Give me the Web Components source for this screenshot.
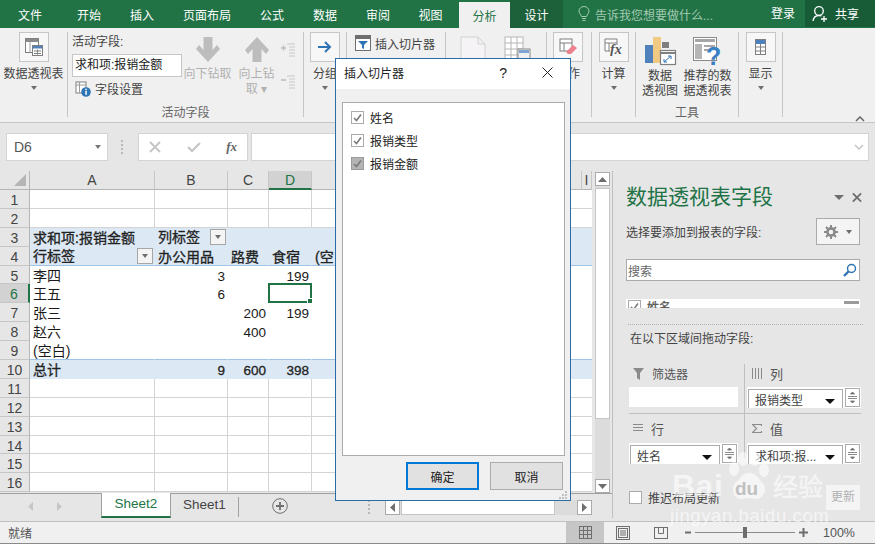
<!DOCTYPE html>
<html lang="zh">
<head>
<meta charset="utf-8">
<title>Excel</title>
<style>
  html, body { margin: 0; height: 100%; overflow: hidden; background: #e6e6e6; }
  body {
    position: relative;
    width: 875px;
    height: 544px;
    font: 12px "Liberation Sans", "Noto Sans CJK SC", sans-serif;
    color: #444;
  }
  .workspace { display: grid; grid-template-columns: 612px 263px; height: 350px; }
  .left { display: flex; flex-direction: column; min-width: 0; }
</style>
</head>
<body>
<excel-titlebar></excel-titlebar>
<excel-ribbon></excel-ribbon>
<excel-formula-bar></excel-formula-bar>
<div class="workspace">
  <div class="left">
    <excel-sheet></excel-sheet>
    <excel-sheet-tabs></excel-sheet-tabs>
  </div>
  <pivot-pane></pivot-pane>
</div>
<excel-status-bar></excel-status-bar>
<slicer-dialog>
  <slicer-check>姓名</slicer-check>
  <slicer-check>报销类型</slicer-check>
  <slicer-check filled>报销金额</slicer-check>
</slicer-dialog>
<baidu-mark></baidu-mark>

<script>
// Excel pivot-table window. Each region is its own element; the ribbon,
// sheet and tab rows are built from small data tables below.

const mount = (host, css, html) => {
  host.attachShadow({ mode: "open" }).innerHTML = `<style>${css}</style>${html}`;
};

const CJK = `"Liberation Sans", "Noto Sans CJK SC", sans-serif`;

const TABS = [
  ["文件", 60], ["开始", 58], ["插入", 48], ["页面布局", 82], ["公式", 48],
  ["数据", 58], ["审阅", 48], ["视图", 57], ["分析", 51, "active"], ["设计", 53, "dark"],
];

class ExcelTitlebar extends HTMLElement {
  constructor() {
    super();
    const tabs = TABS.map(([t, w, c]) => `<div class="tab ${c || ""}" style="width:${w}px">${t}</div>`).join("");
    mount(this, `
      :host { display: flex; height: 28px; background: #217346; color: #fff; font-size: 12px; }
      .tab { display: flex; align-items: center; justify-content: center; height: 28px; flex: none; }
      .tab.active { background: #f0f0f0; color: #217346; height: 26px; margin-top: 2px; }
      .tab.dark { background: #1c6139; }
      .hint { display: flex; align-items: center; gap: 5px; margin-left: 15px; color: #a3c9b2; width: 185px; flex: none; }
      .login { width: 40px; text-align: center; line-height: 28px; flex: none; }
      .share { display: flex; align-items: center; gap: 6px; width: 70px; margin-left: 2px; padding-left: 7px; flex: none;
               box-sizing: border-box; background: #185c37; height: 27px; }
    `, `
      ${tabs}
      <div class="hint">
        <svg width="12" height="16" viewBox="0 0 12 16" fill="none" stroke="#a3c9b2"><path d="M3.500 10.500C3 8.500 1 7.500 1 5a5 4.500 0 0 1 10 0c0 2.500-2 3.500-2.500 5.500zM4 12.500h4M4.500 14.500h3"/></svg>
        <span>告诉我您想要做什么...</span>
      </div>
      <div class="login">登录</div>
      <div class="share">
        <svg width="17" height="18" viewBox="0 0 17 18" fill="none" stroke="#fff" stroke-width="1.300"><circle cx="7" cy="6" r="4.300"/><path d="M1 16c.5-3.500 2.500-5.500 6-5.500 1 0 1.800.2 2.500.5M12 11v6M9 14h6"/></svg>
        <span>共享</span>
      </div>
    `);
  }
}

class RibbonButton extends HTMLElement {
  constructor() {
    super();
    const lines = (this.getAttribute("label") || "").split("|").map((l) => `<div>${l}</div>`).join("");
    const boxed = this.hasAttribute("boxed");
    const caret = this.hasAttribute("caret") ? `<i class="caret"></i>` : "";
    mount(this, `
      :host { display: flex; flex-direction: column; align-items: center; line-height: 15px; color: #444; flex: none; }
      :host([disabled]) { color: #b1b1b1; }
      .icon { display: flex; align-items: flex-start; justify-content: center; height: 30px; }
      .icon.boxed { width: 28px; border: 1px solid #c6c6c6; background: #f7f7f7; height: 28px; align-items: center; }
      .label { margin-top: var(--label-top, 5px); text-align: center; white-space: nowrap; }
      .caret { width: 0; height: 0; margin-top: 4px; border: 3px solid transparent; border-top: 4px solid #6e6e6e; border-bottom: 0; }
    `, `
      <div class="icon ${boxed ? "boxed" : ""}"><slot></slot></div>
      <div class="label">${lines}</div>
      ${caret}
    `);
  }
}

class RibbonGroup extends HTMLElement {
  constructor() {
    super();
    const label = this.getAttribute("label");
    mount(this, `
      :host { display: flex; flex-direction: column; box-sizing: border-box; height: 85px; margin-top: 4px;
              border-right: 1px solid #c6c6c6; flex: none; }
      .body { flex: 1; display: flex; min-height: 0; }
      .name { text-align: center; line-height: 15px; color: #666; height: 15px; margin-bottom: -4px; }
    `, `<div class="body"><slot></slot></div>${label ? `<div class="name">${label}</div>` : ""}`);
  }
}

const ICON_PIVOT = `<svg width="20" height="20" viewBox="0 0 20 20"><rect x="1.500" y="1.500" width="13" height="14" fill="#fff" stroke="#7f7f7f"/><path d="M6 5v10" stroke="#9a9a9a"/><rect x="2" y="2" width="12" height="3" fill="#8a8a8a"/><rect x="8.500" y="8.500" width="10" height="10" fill="#fff" stroke="#7f7f7f"/><rect x="9" y="9" width="9" height="2.500" fill="#4f81bd"/><path d="M10 14h7M10 16.500h7M13.500 12.500v5" stroke="#7f7f7f"/></svg>`;

class ExcelRibbon extends HTMLElement {
  constructor() {
    super();
    mount(this, `
      :host { display: flex; box-sizing: border-box; height: 95px; background: #f0f0f0; border-bottom: 1px solid #c6c6c6; color: #444; }
      .col { display: flex; flex-direction: column; flex: none; }
      .field { padding-left: 4px; width: 115px; box-sizing: border-box; }
      .field .t { line-height: 15px; margin-top: 3px; }
      .field .in { box-sizing: border-box; height: 23px; width: 110px; margin-top: 4px; padding-left: 2px; line-height: 21px;
                   background: #fff; border: 1px solid #c6c6c6; color: #222; white-space: nowrap; }
      .field .set { display: flex; align-items: center; gap: 4px; margin: 3px 0 0 3px; }
      .small { margin: 11px 0 0 0; display: flex; flex-direction: column; gap: 15px; }
      .slice { display: flex; align-items: center; gap: 4px; margin: 3px 0 0 8px; height: 16px; white-space: nowrap; }
      .collapse { margin: 83px 0 0 72px; }
    `, `
      <ribbon-group style="width:68px">
        <ribbon-button label="数据透视表" boxed caret style="width:67px">${ICON_PIVOT}</ribbon-button>
      </ribbon-group>

      <ribbon-group label="活动字段" style="width:236px">
        <div class="col field">
          <div class="t">活动字段:</div>
          <div class="in">求和项:报销金额</div>
          <div class="set">
            <svg width="16" height="16" viewBox="0 0 16 16"><rect x="1" y="1" width="10" height="11" fill="#fff" stroke="#7f7f7f"/><path d="M1 4h10M4.500 1v11" stroke="#9a9a9a"/><circle cx="11" cy="11" r="4.800" fill="#2f75b5"/><rect x="10.300" y="9.800" width="1.500" height="4" fill="#fff"/><rect x="10.300" y="7.700" width="1.500" height="1.400" fill="#fff"/></svg>
            <span>字段设置</span>
          </div>
        </div>
        <ribbon-button label="向下钻取" disabled style="width:49px">
          <svg width="24" height="31" viewBox="0 0 24 31"><path d="M7.500 5h9v13l4.500-5 3 4-12 13L0 17l3-4 4.500 5z" fill="#bdbdbd"/></svg>
        </ribbon-button>
        <ribbon-button label="向上钻|取 ▾" disabled style="width:49px">
          <svg width="24" height="31" viewBox="0 0 24 31"><path d="M7.500 30h9V17l4.500 5 3-4L12 5 0 18l3 4 4.500-5z" fill="#bdbdbd"/></svg>
        </ribbon-button>
        <div class="small">
          <svg width="15" height="17" viewBox="0 0 15 17" fill="none"><path d="M0 5h5M2.500 2.500v5" stroke="#bdbdbd" stroke-width="1.500"/><path d="M6 1h8M8 4h6M8 7h6M8 10h6M8 13h6" stroke="#c8c8c8"/></svg>
          <svg width="15" height="17" viewBox="0 0 15 17" fill="none"><path d="M0 5h5" stroke="#bdbdbd" stroke-width="1.500"/><path d="M6 1h8M8 4h6M8 7h6M8 10h6M8 13h6" stroke="#c8c8c8"/></svg>
        </div>
      </ribbon-group>

      <ribbon-group style="width:43px">
        <ribbon-button label="分组" boxed caret style="width:42px">
          <svg width="14" height="12" viewBox="0 0 14 12" fill="none" stroke="#2f75b5" stroke-width="2"><path d="M0 6h12M7 1l5 5-5 5"/></svg>
        </ribbon-button>
      </ribbon-group>

      <ribbon-group style="width:99px">
        <div class="slice">
          <svg width="16" height="16" viewBox="0 0 16 16"><rect x=".5" y=".5" width="15" height="15" fill="#fff" stroke="#6e6e6e"/><rect x="1" y="1" width="14" height="3" fill="#6e6e6e"/><path d="M3 6h10l-4 4v4l-2-1v-3z" fill="#2f75b5"/></svg>
          <span>插入切片器</span>
        </div>
      </ribbon-group>

      <ribbon-group style="width:101px">
        <div class="col" style="margin:4px 0 0 14px">
          <svg width="27" height="30" viewBox="0 0 27 30" fill="#f6f3f6" stroke="#d2d2d2"><path d="M1 1h17l7 7v21H1zM18 1v7h7"/></svg>
        </div>
        <div class="col" style="margin:4px 0 0 17px">
          <svg width="27" height="30" viewBox="0 0 27 30" fill="#fff" stroke="#b5b5b5"><rect x="1" y="1" width="18" height="25"/><path d="M1 7h18M1 13h18M1 19h18M7 1v25M13 1v25"/><rect x="14" y="13" width="12" height="14" fill="#f0f0f0" stroke="#8a8a8a"/><rect x="15" y="14" width="10" height="3" fill="#7ea6d2" stroke="none"/></svg>
        </div>
      </ribbon-group>

      <ribbon-group style="width:45px">
        <ribbon-button label="操作" boxed caret style="width:44px;margin-left:-1px">
          <svg width="18" height="18" viewBox="0 0 18 18"><rect x="1" y="1" width="12" height="12" fill="#fff" stroke="#7f7f7f"/><path d="M1 5h12M5 5v8" stroke="#7f7f7f"/><path d="M7 14l7-7 4 3-6 6H9z" fill="#ee7f8d"/></svg>
        </ribbon-button>
      </ribbon-group>

      <ribbon-group style="width:44px">
        <ribbon-button label="计算" boxed caret style="width:43px">
          <svg width="19" height="18" viewBox="0 0 19 18"><path d="M13 7V1H1v12h5" fill="#fff" stroke="#7f7f7f"/><path d="M1 5h12M5 5v8" stroke="#7f7f7f"/><text x="6" y="16" font-family="Liberation Serif" font-style="italic" font-weight="700" font-size="14" fill="#555">fx</text></svg>
        </ribbon-button>
      </ribbon-group>

      <ribbon-group label="工具" style="width:103px">
        <ribbon-button label="数据|透视图" style="width:48px;--label-top:7px">
          <svg width="31" height="28" viewBox="0 0 31 28" style="margin-top:5px;overflow:visible"><rect x="0" y="8" width="9" height="18" fill="#4f81bd"/><rect x="8" y="0" width="8" height="26" fill="#f0c982"/><rect x="17" y="5" width="7" height="6" fill="#7f7f7f"/><rect x="15.500" y="13.500" width="15" height="14" fill="#fff" stroke="#7f7f7f" stroke-width="1.200"/><path d="M16 16h14" stroke="#7f7f7f" stroke-width="2"/><path d="M19 25l7-6m0 0h-3m3 0v3M19 25h3m-3 0v-3" fill="none" stroke="#2f75b5"/></svg>
        </ribbon-button>
        <ribbon-button label="推荐的数|据透视表" style="width:49px;margin-left:-1px;--label-top:7px">
          <svg width="29" height="30" viewBox="0 0 29 30" style="margin-top:5px;overflow:visible"><rect x=".5" y=".5" width="23" height="23" fill="#fff" stroke="#8a8a8a"/><rect x="2" y="2" width="20" height="3" fill="#a6a6a6"/><rect x="2" y="7" width="7" height="15" fill="#b5b5b5"/><path d="M11 9h11M11 13h5" stroke="#a6a6a6" stroke-width="2"/><text x="13" y="28" font-family="Liberation Sans" font-weight="700" font-size="25" fill="#3b7fc4">?</text></svg>
        </ribbon-button>
      </ribbon-group>

      <ribbon-group style="width:44px">
        <ribbon-button label="显示" boxed caret style="width:43px">
          <svg width="11" height="16" viewBox="0 0 11 16"><rect x=".5" y=".5" width="10" height="15" fill="#fff" stroke="#7f7f7f"/><rect x="1" y="1" width="9" height="4" fill="#4f81bd"/><path d="M1 8h9M1 12h9M5.500 5v10" stroke="#7f7f7f"/></svg>
        </ribbon-button>
      </ribbon-group>

      <div class="collapse">
        <svg width="10" height="6" viewBox="0 0 10 6" fill="none" stroke="#666" stroke-width="1.500"><path d="M1 5l4-4 4 4"/></svg>
      </div>
    `);
  }
}

class ExcelFormulaBar extends HTMLElement {
  constructor() {
    super();
    mount(this, `
      :host { display: flex; height: 48px; box-sizing: border-box; padding: 10px 6px 10px 6px; background: #e6e6e6; }
      .box { box-sizing: border-box; height: 28px; background: #fff; border: 1px solid #d4d4d4; display: flex; align-items: center; flex: none; }
      .name { width: 102px; padding: 0 6px 0 7px; justify-content: space-between; font-size: 14px; color: #555; }
      .tri { width: 0; height: 0; border: 3.500px solid transparent; border-top: 4px solid #777; border-bottom: 0; }
      .dots { width: 2px; margin: 0 15px 0 13px; display: flex; flex-direction: column; justify-content: center; gap: 2px; flex: none; }
      .dots i { height: 2px; background: #b8b8b8; }
      .fx { width: 110px; padding: 0 10px; justify-content: space-between; color: #666; }
      .fx em { font: italic 700 13px "Liberation Serif", serif; color: #666; }
      .input { width: 618px; margin-left: 3px; justify-content: flex-end; padding-right: 4px; }
    `, `
      <div class="box name"><span>D6</span><i class="tri"></i></div>
      <div class="dots"><i></i><i></i><i></i><i></i></div>
      <div class="box fx">
        <svg width="12" height="12" viewBox="0 0 12 12" fill="none" stroke="#c4c4c4" stroke-width="1.800"><path d="M1 1l10 10M11 1L1 11"/></svg>
        <svg width="14" height="12" viewBox="0 0 14 12" fill="none" stroke="#c4c4c4" stroke-width="2"><path d="M1 6l4 4 8-8"/></svg>
        <em>fx</em>
      </div>
      <div class="box input">
        <svg width="10" height="6" viewBox="0 0 10 6" fill="none" stroke="#c4c4c4" stroke-width="1.500"><path d="M1 1l4 4 4-4"/></svg>
      </div>
    `);
  }
}

// row -> column -> text. Numbers sit to the right of their cell.
const CELLS = {
  3:  { A: "求和项:报销金额", B: "列标签#" },
  4:  { A: "行标签#", B: "办公用品", C: "路费", D: "食宿", E: "(空" },
  5:  { A: "李四", B: 3, D: 199 },
  6:  { A: "王五", B: 6 },
  7:  { A: "张三", C: 200, D: 199 },
  8:  { A: "赵六", C: 400 },
  9:  { A: "(空白)" },
  10: { A: "总计", B: 9, C: 600, D: 398 },
};
const COLS = ["A", "B", "C", "D", "E", "I"];

class ExcelSheet extends HTMLElement {
  constructor() {
    super();
    let grid = `<div class="corner"><svg width="12" height="12" viewBox="0 0 12 12"><path d="M12 0v12H0z" fill="#b5b5b5"/></svg></div>`;
    for (const c of COLS) {
      grid += `<div class="ch ${c === "D" ? "on" : ""}">${c === "E" ? "" : c}</div>`;
    }
    for (let r = 1; r <= 16; r++) {
      grid += `<div class="rh ${r === 6 ? "on" : ""}">${r}</div>`;
      for (const c of COLS) {
        const v = (CELLS[r] || {})[c];
        const pivot = r >= 3 && r <= 10;
        const head = r === 3 || r === 4 || r === 10;
        const cls = [pivot ? "pv" : "", head ? "head" : "", r === 4 || r === 9 ? "under" : "", typeof v === "number" ? "num" : ""];
        if (c === "E" || c === "I") cls.push("noline");
        let inner = v === undefined ? "" : String(v);
        if (inner.endsWith("#")) {
          inner = `<span>${inner.slice(0, -1)}</span><button-filter></button-filter>`;
          cls.push("flt");
        }
        if (r === 6 && c === "D") inner = `<div class="sel"><i></i></div>`;
        grid += `<div class="cell ${cls.join(" ")}">${inner}</div>`;
      }
    }
    mount(this, `
      :host { display: flex; height: 322px; background: #e6e6e6; flex: none; font-family: ${CJK}; }
      .grid { display: grid; width: 592px; grid-template-columns: 30px 125px 73px 41px 43px 270px 10px;
              grid-template-rows: 19px repeat(16, 18.900px); overflow: hidden; }
      .corner { background: #e6e6e6; border-right: 1px solid #b5b5b5; border-bottom: 1px solid #b5b5b5; box-sizing: border-box;
                display: flex; align-items: flex-end; justify-content: flex-end; padding: 0 3px 3px 0; }
      .ch { box-sizing: border-box; background: #e6e6e6; border-right: 1px solid #c6c6c6; border-bottom: 1px solid #b5b5b5;
            text-align: center; font-size: 14px; line-height: 19px; color: #444; overflow: hidden; }
      .ch.on { background: #d2d2d2; color: #217346; border-bottom: 2px solid #217346; }
      .rh { box-sizing: border-box; background: #e6e6e6; border-right: 1px solid #b5b5b5; border-bottom: 1px solid #c6c6c6;
            text-align: center; font-size: 14px; line-height: 20px; color: #444; overflow: hidden; }
      .rh.on { background: #d2d2d2; color: #217346; border-right: 2px solid #217346; }
      .cell { box-sizing: border-box; position: relative; background: #fff; border-right: 1px solid #d4d4d4; border-bottom: 1px solid #d4d4d4;
              font-size: 14px; line-height: 20px; padding: 0 2px 0 3px; color: #1a1a1a; white-space: nowrap; }
      .cell.noline { border-right: 0; }
      .cell.pv { border-right-color: transparent; border-bottom-color: transparent; }
      .cell.head { background: #dce9f5; -webkit-text-stroke: .3px #222; color: #222; }
      .cell.under { border-bottom-color: #9dc3e6; }
      .cell.num { text-align: right; font-size: 13.500px; padding-right: 2px; line-height: 22px; }
      .cell.flt { display: flex; justify-content: space-between; padding-right: 1px; align-items: center; -webkit-text-stroke: .3px #222; }
      .sel { position: absolute; inset: -1px -1px -1px -1px; border: 2px solid #217346; pointer-events: none; }
      .sel i { position: absolute; right: -3px; bottom: -3px; width: 4px; height: 4px; background: #217346; border: 1px solid #fff; }
      .vbar { width: 15px; margin-left: 3px; display: flex; flex-direction: column; height: 321px; margin-top: 1px; background: #dcdcdc; }
      .vbtn { box-sizing: border-box; height: 14px; background: #fff; border: 1px solid #ababab; display: flex; align-items: center; justify-content: center; flex: none; }
      .vth { height: 231px; margin-top: 2px; background: #fff; border: 1px solid #c6c6c6; box-sizing: border-box; flex: none; }
      .gap { flex: 1; }
    `, `
      <div class="grid">${grid}</div>
      <div class="vbar">
        <div class="vbtn"><svg width="9" height="5" viewBox="0 0 9 5"><path d="M0 5l4.500-5L9 5z" fill="#6e6e6e"/></svg></div>
        <div class="vth"></div>
        <div class="gap"></div>
        <div class="vbtn"><svg width="9" height="5" viewBox="0 0 9 5"><path d="M0 0l4.500 5L9 0z" fill="#6e6e6e"/></svg></div>
      </div>
    `);
  }
}

class ButtonFilter extends HTMLElement {
  constructor() {
    super();
    mount(this, `
      :host { display: flex; align-items: center; justify-content: center; box-sizing: border-box; width: 16px; height: 16px;
              background: #f4f4f4; border: 1px solid #a6a6a6; flex: none; }
      i { width: 0; height: 0; border: 3.500px solid transparent; border-top: 4px solid #6e6e6e; border-bottom: 0; }
    `, `<i></i>`);
  }
}

class ExcelSheetTabs extends HTMLElement {
  constructor() {
    super();
    mount(this, `
      :host { display: flex; height: 28px; background: #e6e6e6; border-top: 1px solid #a0a0a0; box-sizing: border-box; flex: none; }
      .nav { display: flex; width: 101px; padding-left: 28px; gap: 24px; box-sizing: border-box; align-items: center; margin-top: -2px; flex: none; }
      .sheet { box-sizing: border-box; height: 24px; text-align: center; line-height: 22px; font-size: 13.500px; color: #444; flex: none; }
      .sheet.on { width: 70px; margin-top: -1px; height: 25px; background: #fff; color: #217346;
                  border: 1px solid #a0a0a0; border-top: 0; border-bottom: 2px solid #217346; }
      .sheet.off { width: 68px; border-right: 1px solid #a0a0a0; margin-top: 3px; height: 20px; line-height: 16px; }
      .add { margin: 4px 0 0 33px; width: 16px; height: 16px; flex: none; }
      .dots { width: 2px; margin-left: 80px; display: flex; flex-direction: column; justify-content: center; gap: 2px; margin-top: -1px; flex: none; }
      .dots i { height: 2px; background: #b8b8b8; }
      .hbar { display: flex; align-items: stretch; height: 15px; width: 207px; margin: 6px 0 0 15px; background: #dcdcdc; flex: none; }
      .hbtn { box-sizing: border-box; width: 15px; background: #fff; border: 1px solid #ababab; display: flex; align-items: center; justify-content: center; flex: none; }
      .hth { box-sizing: border-box; width: 154px; margin-left: 1px; background: #fff; border: 1px solid #c6c6c6; }
      .gap { flex: 1; }
    `, `
      <div class="nav">
        <svg width="5" height="9" viewBox="0 0 5 9"><path d="M5 0v9L0 4.500z" fill="#c6c6c6"/></svg>
        <svg width="5" height="9" viewBox="0 0 5 9"><path d="M0 0v9l5-4.500z" fill="#c6c6c6"/></svg>
      </div>
      <div class="sheet on">Sheet2</div>
      <div class="sheet off">Sheet1</div>
      <div class="add"><svg width="16" height="16" viewBox="0 0 16 16" fill="none" stroke="#6e6e6e"><circle cx="8" cy="8" r="7.300"/><path d="M8 4v8M4 8h8" stroke-width="1.800"/></svg></div>
      <div class="dots"><i></i><i></i><i></i><i></i></div>
      <div class="hbar">
        <div class="hbtn"><svg width="5" height="9" viewBox="0 0 5 9"><path d="M5 0v9L0 4.500z" fill="#6e6e6e"/></svg></div>
        <div class="hth"></div>
        <div class="gap"></div>
        <div class="hbtn"><svg width="5" height="9" viewBox="0 0 5 9"><path d="M0 0v9l5-4.500z" fill="#6e6e6e"/></svg></div>
      </div>
    `);
  }
}

class AreaPill extends HTMLElement {
  constructor() {
    super();
    mount(this, `
      :host { display: flex; gap: 2px; height: 21px; box-sizing: border-box; padding: 2px 1px 0 1px; background: #fff; overflow: hidden; font-size: 12px; color: #444; }
      .sel { flex: 1; box-sizing: border-box; height: 24px; border: 1px solid #ababab; padding: 2px 7px 0 6px; display: flex; justify-content: space-between; white-space: nowrap; line-height: 18px; }
      .sel i { width: 0; height: 0; margin-top: 7px; border: 5px solid transparent; border-top: 5px solid #111; border-bottom: 0; }
      .spin { box-sizing: border-box; width: 15px; height: 19px; border: 1px solid #ababab; margin-top: -1px; display: flex; flex-direction: column; justify-content: space-evenly; align-items: center; flex: none; }
    `, `
      <div class="sel"><span><slot></slot></span><i></i></div>
      <div class="spin">
        <svg width="9" height="6" viewBox="0 0 9 6"><path d="M0 5.500h9M2.500 3l2-2 2 2z" stroke="#6e6e6e" fill="#6e6e6e" stroke-width=".8"/></svg>
        <svg width="9" height="6" viewBox="0 0 9 6"><path d="M0 .5h9M2.500 3l2 2 2-2z" stroke="#6e6e6e" fill="#6e6e6e" stroke-width=".8"/></svg>
      </div>
    `);
  }
}

class PivotPane extends HTMLElement {
  constructor() {
    super();
    mount(this, `
      :host { display: block; box-sizing: border-box; height: 347px; background: #e6e6e6; border-left: 1px solid #c0c0c0; color: #444; padding-left: 13px; }
      .title { display: flex; align-items: center; height: 30px; margin-top: 0; padding-top: 11px; }
      .title h1 { margin: 0; font-size: 21px; font-weight: 400; color: #217346; line-height: 30px; width: 208px; white-space: nowrap; flex: none; }
      .title i { width: 0; height: 0; border: 5px solid transparent; border-top: 5px solid #6e6e6e; border-bottom: 0; }
      .title svg { margin-left: 8px; }
      .pick { display: flex; align-items: center; justify-content: space-between; width: 234px; height: 27px; margin-top: 6px; white-space: nowrap; }
      .gear { box-sizing: border-box; width: 44px; height: 27px; background: #f4f4f4; border: 1px solid #ababab; display: flex; align-items: center; justify-content: center; gap: 8px; }
      .gear i { width: 0; height: 0; border: 3.500px solid transparent; border-top: 4px solid #6e6e6e; border-bottom: 0; }
      .search { box-sizing: border-box; display: flex; align-items: center; justify-content: space-between; width: 234px; height: 22px; margin-top: 14px;
                background: #fff; border: 1px solid #ababab; padding: 0 2px 0 1px; color: #666; }
      .fields { width: 234px; height: 9px; margin-top: 18px; background: #fff; overflow: hidden; display: flex; font-size: 12px; line-height: 18px; -webkit-text-stroke: .3px #555; color: #555; }
      .fields .cb { box-sizing: border-box; width: 13px; height: 13px; border: 1px solid #ababab; margin: 1px 6px 0 2px; display: flex; align-items: center; justify-content: center; }
      .fields .thumb { margin-left: auto; width: 15px; height: 3px; margin-top: 2px; margin-right: 1px; background: #9a9a9a; }
      .dotline { width: 235px; margin: 16px 0 0 2px; border-top: 1px dotted #b0b0b0; }
      .drag { margin: 7px 0 0 4px; line-height: 15px; white-space: nowrap; }
      .areas { display: grid; grid-template-columns: 116px 1px 116px; grid-template-rows: 49px 1px 51px; width: 233px; margin: 17px 0 0 2px; }
      .cell { display: flex; flex-direction: column; min-width: 0; }
      .cap { display: flex; align-items: center; gap: 8px; height: 19px; margin: 0 0 0 5px; color: #555; font-size: 12px; white-space: nowrap; flex: none; }
      .cap svg { flex: none; }
      .cap.big { font-size: 13px; }
      .low .cap { margin-top: 5px; }
      .r { padding-left: 2px; grid-column: 3; }
      .l { grid-column: 1; }
      .top { grid-row: 1; }
      .low { grid-row: 3; }
      .blank { height: 20px; margin: 4px 6px 0 1px; background: #fff; }
      .l area-pill { margin: 5px 6px 0 1px; }
      .r area-pill { margin-top: 4px; width: 114px; }
      .low.r area-pill { margin-top: 5px; }
      .hline { grid-column: 1 / 4; grid-row: 2; background: #c0c0c0; margin-left: 1px; }
      .vline { background: #c0c0c0; grid-row: 1 / 4; grid-column: 2; margin-bottom: 7px; }
      .foot { display: flex; align-items: center; width: 231px; height: 25px; margin: 20px 0 0 3px; white-space: nowrap; }
      .foot .cb { box-sizing: border-box; width: 13px; height: 13px; background: #fff; border: 1px solid #ababab; margin-right: 6px; flex: none; }
      .foot .upd { margin-left: auto; box-sizing: border-box; width: 34px; height: 25px; background: #f4f4f4; color: #b1b1b1; text-align: center; line-height: 25px; }
    `, `
      <div class="title">
        <h1>数据透视表字段</h1><i></i>
        <svg width="10" height="11" viewBox="0 0 11 11" fill="none" stroke="#6e6e6e" stroke-width="2"><path d="M1 1l9 9M10 1l-9 9"/></svg>
      </div>
      <div class="pick">
        <span>选择要添加到报表的字段:</span>
        <div class="gear">
          <svg width="14" height="14" viewBox="0 0 14 14"><circle cx="7" cy="7" r="3.600" fill="none" stroke="#8a8a8a" stroke-width="2.600"/><path d="M7 0v3M7 11v3M0 7h3M11 7h3M2 2l2 2M10 10l2 2M12 2l-2 2M4 10l-2 2" stroke="#8a8a8a" stroke-width="2"/></svg>
          <i></i>
        </div>
      </div>
      <div class="search">
        <span>搜索</span>
        <svg width="14" height="14" viewBox="0 0 14 14" fill="none"><circle cx="8.500" cy="5.500" r="4" stroke="#2f75b5" stroke-width="1.500"/><path d="M5.500 8.500L1 13" stroke="#2f75b5" stroke-width="2.400"/></svg>
      </div>
      <div class="fields"><div class="cb"><svg width="9" height="9" viewBox="0 0 9 9" fill="none" stroke="#7a7a7a" stroke-width="1.500"><path d="M1 5l2.500 2.500L8 1.500"/></svg></div><span>姓名</span><div class="thumb"></div></div>
      <div class="dotline"></div>
      <div class="drag">在以下区域间拖动字段:</div>
      <div class="areas">
        <div class="cell l top">
          <div class="cap"><svg width="11" height="12" viewBox="0 0 11 12"><path d="M0 0h11L7 5v7L4 10V5z" fill="#8a8a8a"/></svg><span>筛选器</span></div>
          <div class="blank"></div>
        </div>
        <div class="vline"></div>
        <div class="cell r top">
          <div class="cap big"><svg width="10" height="11" viewBox="0 0 10 11"><path d="M.5 0v11M3.500 0v11M6.500 0v11M9.500 0v11" stroke="#8a8a8a"/></svg><span>列</span></div>
          <area-pill>报销类型</area-pill>
        </div>
        <div class="hline"></div>
        <div class="cell l low">
          <div class="cap big"><svg width="10" height="9" viewBox="0 0 10 9"><path d="M0 .5h10M0 3.500h10M0 6.500h10" stroke="#8a8a8a"/></svg><span>行</span></div>
          <area-pill>姓名</area-pill>
        </div>
        <div class="cell r low">
          <div class="cap big"><svg width="10" height="9" viewBox="0 0 10 9" fill="none"><path d="M9.500 2V.5h-9l4 4-4 4h9V7" stroke="#8a8a8a" stroke-width="1.200"/></svg><span>值</span></div>
          <area-pill>求和项:报...</area-pill>
        </div>
      </div>
      <div class="foot"><div class="cb"></div><span>推迟布局更新</span><div class="upd">更新</div></div>
    `);
  }
}

class ExcelStatusBar extends HTMLElement {
  constructor() {
    super();
    mount(this, `
      :host { display: flex; align-items: center; box-sizing: border-box; height: 23px; background: #f0f0f0; border-top: 1px solid #c0c0c0; border-bottom: 1px solid #8a8a8a; color: #555; padding-left: 8px; }
      .ready { width: 558px; flex: none; }
      .view { display: flex; align-items: center; justify-content: center; width: 38px; height: 21px; flex: none; }
      .view.on { background: #c6c6c6; }
      .zoom { display: flex; align-items: center; margin-left: 5px; flex: none; }
      .track { position: relative; width: 100px; height: 1px; background: #8a8a8a; margin: 0 4px; }
      .track i { position: absolute; left: 48px; top: -5px; width: 4px; height: 11px; background: #6e6e6e; }
      .pct { margin-left: 15px; font-size: 12.500px; color: #555; }
    `, `
      <span class="ready">就绪</span>
      <div class="view on"><svg width="13" height="13" viewBox="0 0 13 13" fill="none" stroke="#6e6e6e"><rect x=".5" y=".5" width="12" height="12"/><path d="M4.500 0v13M8.500 0v13M0 4.500h13M0 8.500h13"/></svg></div>
      <div class="view"><svg width="14" height="14" viewBox="0 0 14 14" fill="none" stroke="#6e6e6e"><rect x=".5" y=".5" width="13" height="13"/><rect x="2.500" y="2.500" width="9" height="9"/><path d="M4 5h6M4 7h6M4 9h6"/></svg></div>
      <div class="view"><svg width="14" height="12" viewBox="0 0 14 12" fill="none" stroke="#6e6e6e"><rect x=".5" y=".5" width="13" height="11"/><path d="M4.500 0v6.500h5V0"/></svg></div>
      <div class="zoom">
        <svg width="6" height="3" viewBox="0 0 6 3"><rect width="6" height="2" y=".5" fill="#6e6e6e"/></svg>
        <div class="track"><i></i></div>
        <svg width="9" height="9" viewBox="0 0 9 9"><path d="M4.500 0v9M0 4.500h9" stroke="#6e6e6e" stroke-width="2"/></svg>
        <span class="pct">100%</span>
      </div>
    `);
  }
}

class SlicerCheck extends HTMLElement {
  constructor() {
    super();
    mount(this, `
      :host { display: flex; align-items: center; gap: 6px; height: 23px; color: #222; }
      .box { box-sizing: border-box; width: 13px; height: 13px; border: 1px solid #ababab; background: #fff; display: flex; align-items: center; justify-content: center; }
      :host([filled]) .box { background: #b4b4b4; border-color: #9a9a9a; }
    `, `
      <div class="box"><svg width="9" height="9" viewBox="0 0 9 9" fill="none" stroke="#7a7a7a" stroke-width="1.600"><path d="M1 5l2.500 2.500L8 1.500"/></svg></div>
      <slot></slot>
    `);
  }
}

class SlicerDialog extends HTMLElement {
  constructor() {
    super();
    mount(this, `
      :host { position: absolute; left: 335px; top: 58px; width: 236px; height: 443px; box-sizing: border-box; display: flex; flex-direction: column;
              background: #f0f0f0; border: 1px solid #2b6ca8; color: #222; font-size: 12px; }
      .head { display: flex; align-items: center; box-sizing: border-box; height: 30px; flex: none; background: #fff; padding: 0 17px 3px 8px; }
      .head span { flex: 1; }
      .head b { font: 400 14px "Liberation Sans", sans-serif; margin-right: 35px; }
      .list { box-sizing: border-box; height: 354px; margin: 13px 5px 0 6px; background: #fff; border: 1px solid #ababab; padding: 3px 8px; }
      .btns { display: flex; justify-content: flex-end; gap: 11px; margin: 6px 7px 0 0; }
      .btn { box-sizing: border-box; width: 73px; height: 28px; background: #e1e1e1; border: 1px solid #ababab; display: flex; align-items: center; justify-content: center; color: #222; }
      .btn.def { border: 2px solid #0078d7; }
      .grip { display: flex; justify-content: flex-end; margin: 1px 2px 0 0; }
    `, `
      <div class="head">
        <span>插入切片器</span><b>?</b>
        <svg width="11" height="11" viewBox="0 0 11 11" fill="none" stroke="#222"><path d="M.5.5l10 10M10.500.5l-10 10"/></svg>
      </div>
      <div class="list"><slot></slot></div>
      <div class="btns"><div class="btn def">确定</div><div class="btn">取消</div></div>
      <div class="grip"><svg width="9" height="9" viewBox="0 0 9 9" fill="#c0c0c0"><rect x="6" y="0" width="2" height="2"/><rect x="3" y="3" width="2" height="2"/><rect x="6" y="3" width="2" height="2"/><rect x="0" y="6" width="2" height="2"/><rect x="3" y="6" width="2" height="2"/><rect x="6" y="6" width="2" height="2"/></svg></div>
    `);
  }
}

// jingyan.baidu.com stamp in the lower right corner, on top of everything.
class BaiduMark extends HTMLElement {
  constructor() {
    super();
    mount(this, `
      :host { position: absolute; left: 670px; top: 450px; width: 160px; height: 76px; pointer-events: none; color: #fff; opacity: .6; }
      .row { display: flex; align-items: flex-start; height: 50px; }
      .bai { font: 700 32px/32px "Liberation Sans", sans-serif; width: 54px; margin: 20px 0 0 2px; letter-spacing: .5px; flex: none; }
      svg { flex: none; }
      .jy { font: 400 25px/28px "Noto Sans CJK SC", sans-serif; margin: 21px 0 0 1px; white-space: nowrap; -webkit-text-stroke: .5px #fff; }
      .url { font: 400 18.500px/22px "Liberation Sans", sans-serif; margin-top: 5px; white-space: nowrap; letter-spacing: .6px; }
    `, `
      <div class="row">
        <span class="bai">Bai</span>
        <svg width="46" height="50" viewBox="0 0 46 50">
          <g fill="#fff">
            <ellipse cx="8" cy="19" rx="5" ry="7"/><ellipse cx="17" cy="9" rx="5" ry="7"/><ellipse cx="29" cy="9" rx="5" ry="7"/><ellipse cx="38" cy="20" rx="5" ry="7"/>
            <path d="M23 23c8 0 9 6 13 9 6 5 3 17-6 17-3 0-4-1-7-1s-5 1-8 1c-8 0-11-11-5-17 5-3 5-9 13-9z"/>
          </g>
          <text x="9" y="45" font-family="Liberation Sans" font-weight="700" font-size="19" fill="#a8a8a8">du</text>
        </svg>
        <span class="jy">经验</span>
      </div>
      <div class="url">jingyan.baidu.com</div>
    `);
  }
}

customElements.define("ribbon-button", RibbonButton);
customElements.define("ribbon-group", RibbonGroup);
customElements.define("button-filter", ButtonFilter);
customElements.define("area-pill", AreaPill);
customElements.define("slicer-check", SlicerCheck);
customElements.define("excel-titlebar", ExcelTitlebar);
customElements.define("excel-ribbon", ExcelRibbon);
customElements.define("excel-formula-bar", ExcelFormulaBar);
customElements.define("excel-sheet", ExcelSheet);
customElements.define("excel-sheet-tabs", ExcelSheetTabs);
customElements.define("pivot-pane", PivotPane);
customElements.define("excel-status-bar", ExcelStatusBar);
customElements.define("slicer-dialog", SlicerDialog);
customElements.define("baidu-mark", BaiduMark);
</script>
</body>
</html>
